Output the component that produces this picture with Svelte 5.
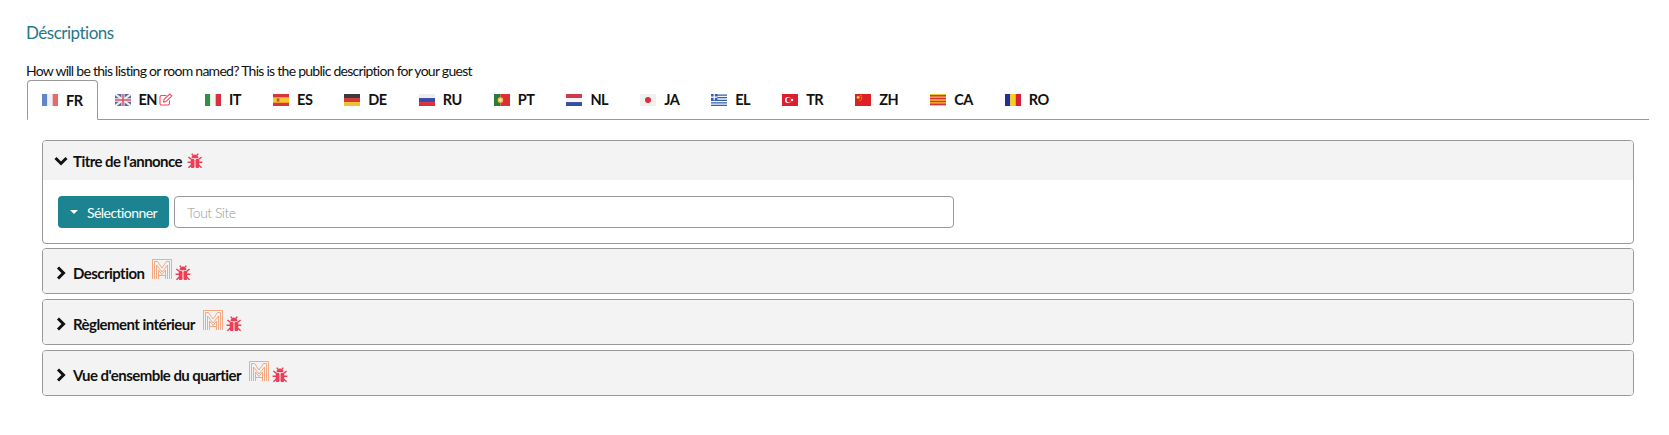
<script lang="ts">
  const tabs = ['FR', 'EN', 'IT', 'ES', 'DE', 'RU', 'PT', 'NL', 'JA', 'EL', 'TR', 'ZH', 'CA', 'RO']
  const sections = ['Description', 'Règlement intérieur', "Vue d'ensemble du quartier"]
</script>

{#snippet flag(code: string)}
  <svg class="flag" viewBox="0 0 15 11" width="16" height="12" preserveAspectRatio="none" aria-hidden="true">
    {#if code === 'FR'}
      <rect width="5" height="11" fill="#5f86c8" /><rect x="5" width="5" height="11" fill="#eef0f6" /><rect x="10" width="5" height="11" fill="#e76a6a" />
    {:else if code === 'EN'}
      <rect width="15" height="11" fill="#5a66a8" />
      <path d="M0 0L15 11M15 0L0 11" stroke="#eee" stroke-width="2" />
      <path d="M7.5 0V11M0 5.5H15" stroke="#eee" stroke-width="3" />
      <path d="M7.5 0V11M0 5.5H15" stroke="#d9505c" stroke-width="1.4" />
    {:else if code === 'IT'}
      <rect width="5" height="11" fill="#2f8f46" /><rect x="5" width="5" height="11" fill="#f3f3f0" /><rect x="10" width="5" height="11" fill="#d8303c" />
    {:else if code === 'ES'}
      <rect width="15" height="11" fill="#d8363a" /><rect y="3" width="15" height="5" fill="#f5c92e" /><rect x="3.5" y="4" width="2.5" height="3" fill="#c05a30" />
    {:else if code === 'DE'}
      <rect width="15" height="3.7" fill="#3a3a3a" /><rect y="3.7" width="15" height="3.7" fill="#d8383a" /><rect y="7.4" width="15" height="3.6" fill="#f2c22e" />
    {:else if code === 'RU'}
      <rect width="15" height="3.7" fill="#eceef4" /><rect y="3.7" width="15" height="3.7" fill="#3a4aa8" /><rect y="7.4" width="15" height="3.6" fill="#d8303c" />
    {:else if code === 'PT'}
      <rect width="6" height="11" fill="#2d7a3a" /><rect x="6" width="9" height="11" fill="#dc2f36" /><circle cx="6" cy="5.5" r="2.6" fill="#f0c838" /><circle cx="6" cy="5.5" r="1.2" fill="#e8e8e8" />
    {:else if code === 'NL'}
      <rect width="15" height="3.7" fill="#cf3a44" /><rect y="3.7" width="15" height="3.7" fill="#f4f4f6" /><rect y="7.4" width="15" height="3.6" fill="#32509c" />
    {:else if code === 'JA'}
      <rect width="15" height="11" fill="#f0f0f0" /><circle cx="7.5" cy="5.5" r="2.8" fill="#e02b3a" />
    {:else if code === 'EL'}
      <rect width="15" height="11" fill="#f4f6fa" />
      <path d="M0 1H15M0 3.4H15M0 5.8H15M0 8.2H15M0 10.4H15" stroke="#3560ad" stroke-width="1.2" />
      <rect width="6" height="5.8" fill="#3560ad" /><path d="M3 0V5.8M0 2.9H6" stroke="#fff" stroke-width="1.1" />
    {:else if code === 'TR'}
      <rect width="15" height="11" fill="#dc1f2e" /><circle cx="5.6" cy="5.5" r="2.8" fill="#fff" /><circle cx="6.4" cy="5.5" r="2.2" fill="#dc1f2e" /><circle cx="9.4" cy="5.5" r="1.1" fill="#fff" />
    {:else if code === 'ZH'}
      <rect width="15" height="11" fill="#dd1f26" /><circle cx="3" cy="3" r="1.4" fill="#f7d320" /><circle cx="5.6" cy="1.5" r=".5" fill="#f7d320" /><circle cx="6.4" cy="3" r=".5" fill="#f7d320" /><circle cx="6" cy="4.6" r=".5" fill="#f7d320" /><circle cx="4.7" cy="5.7" r=".5" fill="#f7d320" />
    {:else if code === 'CA'}
      <rect width="15" height="11" fill="#f4c92c" />
      <path d="M0 1.6H15M0 4.2H15M0 6.8H15M0 9.4H15" stroke="#d8303a" stroke-width="1.3" />
    {:else if code === 'RO'}
      <rect width="5" height="11" fill="#23308e" /><rect x="5" width="5" height="11" fill="#f7d117" /><rect x="10" width="5" height="11" fill="#d8203a" />
    {/if}
  </svg>
{/snippet}

{#snippet bug()}
  <svg class="bug" viewBox="0 0 16 16" width="16" height="16" aria-hidden="true">
    <path d="M4.4 5.2C4.8 2.8 6.2 1.6 8 1.6s3.2 1.2 3.6 3.6z" fill="#ee3e56" />
    <rect x="3.8" y="6" width="3.7" height="9" rx="1.2" fill="#ee3e56" />
    <rect x="8.5" y="6" width="3.7" height="9" rx="1.2" fill="#ee3e56" />
    <path d="M4.5 6.5L1.4 4M11.5 6.5L14.6 4M4 9.2H.6M12 9.2H15.4M4.4 12L1.4 14.8M11.6 12L14.6 14.8M6 2.4L4.8.6M10 2.4L11.2.6" stroke="#ee3e56" stroke-width="1.5" fill="none" />
  </svg>
{/snippet}

{#snippet logo()}
  <svg class="logo" viewBox="0 0 20 20" width="20" height="20" aria-hidden="true" fill="none" stroke="#f2a277" stroke-width=".9">
    <path d="M.5 20V.5H19.5V20" />
    <path d="M2.5 20V2.5H5.5L10 9L14.5 2.5H17.5V20" />
    <path d="M4.5 20V6L10 13L15.5 6V20" />
    <path d="M6.5 20V11L10 15.5L13.5 11V20" />
    <path d="M6.5 16.5H13.5" />
  </svg>
{/snippet}

<div class="page">
  <h4>Déscriptions</h4>
  <p class="help">How will be this listing or room named? This is the public description for your guest</p>

  <ul class="tabs">
    {#each tabs as code, i}
      <li class:active={i === 0}>
        {@render flag(code)}
        <span>{code}</span>
        {#if code === 'EN'}
          <svg class="edit" viewBox="0 0 14 13" width="14" height="13" aria-hidden="true" fill="none" stroke="#ee4a5c" stroke-width="1.1">
            <path d="M10.5 7.5V10.5C10.5 11.4 9.9 12 9 12H2.5C1.6 12 1 11.4 1 10.5V4C1 3.1 1.6 2.5 2.5 2.5H7.5" />
            <path d="M5 6.4L10.8 1L12.8 3L7 8.6L4.6 9z" />
          </svg>
        {/if}
      </li>
    {/each}
  </ul>

  <div class="panels">
    <section class="panel first">
      <header>
        <svg class="chev" viewBox="0 0 14 10" width="14" height="10" aria-hidden="true"><path d="M1.5 2L7 7.5L12.5 2" /></svg>
        <span class="name">Titre de l'annonce</span>
        {@render bug()}
      </header>
      <div class="body">
        <button type="button"><i class="caret"></i>Sélectionner</button>
        <input type="text" placeholder="Tout Site" />
      </div>
    </section>

    {#each sections as title}
      <section class="panel closed">
        <header>
          <svg class="chev right" viewBox="0 0 10 14" width="10" height="14" aria-hidden="true"><path d="M2 1.5L7.5 7L2 12.5" /></svg>
          <span class="name">{title}</span>
          {@render logo()}
          {@render bug()}
        </header>
      </section>
    {/each}
  </div>
</div>

<style>
  :global(body) {
    margin: 0;
    background: #fff;
  }

  .page {
    padding: 22px 20px 0 27px;
    font-family: "Lato", "Liberation Sans", sans-serif;
    color: #111;
  }

  h4 {
    margin: 0 0 0 -1px;
    font-size: 17px;
    line-height: 22px;
    font-weight: 400;
    letter-spacing: -0.5px;
    color: #25788a;
  }

  .help {
    margin: 17px 0 0 -1px;
    font-size: 14px;
    line-height: 19px;
    letter-spacing: -0.73px;
    color: #111;
  }

  .tabs {
    display: flex;
    list-style: none;
    margin: 0;
    padding: 0;
    height: 39px;
    border-bottom: 1px solid #999;
  }

  .tabs li {
    display: flex;
    align-items: center;
    height: 39px;
    box-sizing: border-box;
    padding: 0 15px;
    border: 1px solid transparent;
    font-size: 14.5px;
    font-weight: 700;
    letter-spacing: -0.5px;
  }

  .tabs li.active {
    height: 40px;
    padding: 0 14px;
    margin-right: 1px;
    background: #fff;
    border-color: #999;
    border-bottom-color: #fff;
    border-radius: 4px 4px 0 0;
  }

  .flag {
    margin-right: 8px;
    flex: none;
  }

  .edit {
    margin-left: 2px;
    flex: none;
  }

  .panels {
    display: flex;
    flex-direction: column;
    gap: 5px;
    margin: 20px 15px 0 15px;
  }

  .panel {
    border: 1px solid #999;
    border-radius: 4px;
    overflow: hidden;
  }

  .panel.first {
    margin-bottom: -1px;
  }

  .panel header {
    display: flex;
    align-items: center;
    height: 39px;
    padding: 0 11px;
    background: #f3f3f3;
  }

  .panel.closed header {
    height: 44px;
    box-sizing: border-box;
    padding-top: 3px;
  }

  .name {
    font-size: 15px;
    font-weight: 700;
    letter-spacing: -0.55px;
    color: #111;
  }

  .chev {
    flex: none;
    margin-right: 5px;
  }

  .chev path {
    fill: none;
    stroke: #111;
    stroke-width: 3;
  }

  .chev.right {
    margin: 0 7px 0 2px;
  }

  .logo {
    margin: -8px 0 0 8px;
    flex: none;
  }

  .bug {
    margin-left: 5px;
    flex: none;
  }

  .logo + .bug {
    margin-left: 3px;
  }

  .body {
    display: flex;
    gap: 5px;
    padding: 16px 15px 15px;
  }

  button {
    display: flex;
    align-items: center;
    height: 32px;
    padding: 0 12px;
    background: #1c8490;
    color: #fff;
    border: none;
    border-radius: 4px;
    font: 400 14px "Lato", "Liberation Sans", sans-serif;
    letter-spacing: -0.55px;
    width: 111px;
    box-sizing: border-box;
  }

  .caret {
    width: 0;
    height: 0;
    margin-right: 9px;
    border: 4.5px solid transparent;
    border-top-color: #fff;
    border-bottom: 0;
  }

  input {
    width: 780px;
    height: 32px;
    box-sizing: border-box;
    padding: 0 12px;
    border: 1px solid #999;
    border-radius: 4px;
    font: 300 14px "Lato", "Liberation Sans", sans-serif;
    letter-spacing: -0.5px;
  }

  input::placeholder {
    color: #999;
  }
</style>
